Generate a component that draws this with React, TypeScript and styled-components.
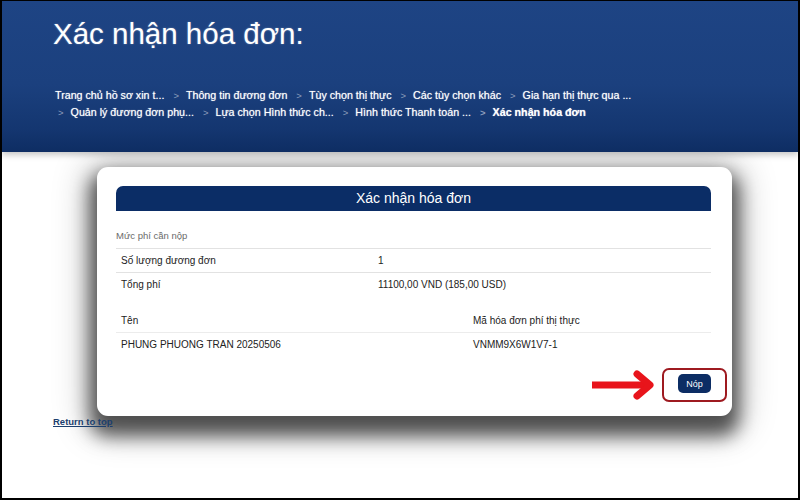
import React from "react";
import styled, { createGlobalStyle } from "styled-components";

const Global = createGlobalStyle`
  html, body { margin: 0; padding: 0; background: #fff; }
  body { font-family: "Liberation Sans", Arial, sans-serif; }
`;

const Frame = styled.div`
  width: 800px;
  height: 500px;
  box-sizing: border-box;
  border: 2px solid #000;
  border-top-width: 1px;
  background: #fff;
  overflow: hidden;
  display: flex;
  flex-direction: column;
`;

const Header = styled.header`
  height: 151px;
  box-sizing: border-box;
  padding: 17px 0 0 51px;
  background: linear-gradient(180deg, #1e4484 0%, #1b407e 55%, #143670 85%, #0e2d63 100%);
  box-shadow: 0 3px 6px rgba(0, 0, 0, 0.22);
  position: relative;
  z-index: 1;
`;

const Title = styled.h1`
  margin: 0;
  font-family: "Liberation Sans", Arial, sans-serif;
  font-weight: normal;
  font-size: 29.5px;
  line-height: 32px;
  color: #fff;
  text-shadow: 0 0 2px rgba(255, 255, 255, 0.35);
`;

const Crumbs = styled.nav`
  margin-top: 37px;
  max-width: 650px;
  display: flex;
  flex-wrap: wrap;
  padding-left: 2px;
`;

const Crumb = styled.span<{ $current?: boolean }>`
  white-space: nowrap;
  font-size: 10.7px;
  line-height: 16px;
  padding-right: 6px;
  color: #fff;
  font-weight: ${(p) => (p.$current ? "bold" : "normal")};
  text-shadow: 0 0 1px rgba(255, 255, 255, 0.7);
`;

const Sep = styled.span`
  display: inline-block;
  color: #8d9dbb;
  font-size: 9.5px;
  margin: 0 7px 0 3px;
  text-shadow: none;
`;

const Main = styled.main`
  flex: 1;
  padding-top: 15px;
`;

const Card = styled.section`
  margin-left: 95px;
  width: 635px;
  box-sizing: border-box;
  padding: 19px 21px 14px 19px;
  background: #fff;
  border-radius: 11px;
  box-shadow: 0 13px 18px 7px rgba(0, 0, 0, 0.62), 0 6px 34px 12px rgba(0, 0, 0, 0.22);
`;

const CardHead = styled.div`
  height: 25px;
  background: #0b2d66;
  border-radius: 7px 7px 0 0;
  color: #fff;
  font-size: 14px;
  line-height: 25px;
  text-align: center;
`;

const SectionLabel = styled.div`
  padding: 19px 0 6px;
  font-size: 9.5px;
  line-height: 12px;
  color: #6a6a6a;
`;

const Table = styled.div<{ $split: string }>`
  display: grid;
  grid-template-columns: ${(p) => p.$split};
`;

const Cell = styled.div<{ $line?: "top" | "bottom" }>`
  height: 24px;
  box-sizing: border-box;
  padding: 0 5px;
  font-size: 10px;
  line-height: 23px;
  color: #222;
  border-top: ${(p) => (p.$line === "top" ? "1px solid #e2e2e2" : "none")};
  border-bottom: ${(p) => (p.$line === "bottom" ? "1px solid #ececec" : "none")};
`;

const Spacer = styled.div`
  height: 13px;
`;

const Footer = styled.div`
  margin-top: 11px;
  margin-right: -16px;
  display: flex;
  justify-content: flex-end;
  align-items: center;
  gap: 6px;
`;

const Highlight = styled.div`
  width: 65px;
  height: 34px;
  box-sizing: border-box;
  border: 2px solid #9e1a20;
  border-radius: 7px;
  display: flex;
  justify-content: center;
  padding-top: 4px;
`;

const SubmitButton = styled.button`
  width: 33px;
  height: 19px;
  border: none;
  padding: 0;
  border-radius: 5px;
  background: #0c2d64;
  color: #fff;
  font-family: "Liberation Sans", Arial, sans-serif;
  font-size: 9px;
  cursor: pointer;
`;

const TopLink = styled.a`
  display: block;
  margin: 0 0 0 51px;
  width: max-content;
  font-size: 9.5px;
  line-height: 11px;
  font-weight: bold;
  color: #1c3f6e;
  text-decoration: underline;
`;

const crumbs = [
  "Trang chủ hồ sơ xin t...",
  "Thông tin đương đơn",
  "Tùy chọn thị thực",
  "Các tùy chọn khác",
  "Gia hạn thị thực qua ...",
  "Quản lý đương đơn phụ...",
  "Lựa chọn Hình thức ch...",
  "Hình thức Thanh toán ...",
  "Xác nhận hóa đơn",
];

const Arrow = () => (
  <svg width="66" height="30" viewBox="0 0 66 30">
    <path d="M2 15 H57" stroke="#e8141b" strokeWidth="7" fill="none" />
    <path
      d="M47 4 L60 15 L47 26"
      stroke="#e8141b"
      strokeWidth="7"
      fill="none"
      strokeLinecap="round"
      strokeLinejoin="round"
    />
  </svg>
);

export default function App() {
  return (
    <>
      <Global />
      <Frame>
        <Header>
          <Title>Xác nhận hóa đơn:</Title>
          <Crumbs>
            {crumbs.map((c, i) => (
              <Crumb key={c} $current={i === crumbs.length - 1}>
                {i > 0 && <Sep>&gt;</Sep>}
                {c}
              </Crumb>
            ))}
          </Crumbs>
        </Header>
        <Main>
          <Card>
            <CardHead>Xác nhận hóa đơn</CardHead>
            <SectionLabel>Mức phí cần nộp</SectionLabel>
            <Table $split="257px 1fr">
              <Cell $line="top">Số lượng đương đơn</Cell>
              <Cell $line="top">1</Cell>
              <Cell $line="top">Tổng phí</Cell>
              <Cell $line="top">11100,00 VND (185,00 USD)</Cell>
            </Table>
            <Spacer />
            <Table $split="352px 1fr">
              <Cell $line="bottom">Tên</Cell>
              <Cell $line="bottom">Mã hóa đơn phí thị thực</Cell>
              <Cell>PHUNG PHUONG TRAN 20250506</Cell>
              <Cell>VNMM9X6W1V7-1</Cell>
            </Table>
            <Footer>
              <Arrow />
              <Highlight>
                <SubmitButton>Nóp</SubmitButton>
              </Highlight>
            </Footer>
          </Card>
          <TopLink href="#top">Return to top</TopLink>
        </Main>
      </Frame>
    </>
  );
}
